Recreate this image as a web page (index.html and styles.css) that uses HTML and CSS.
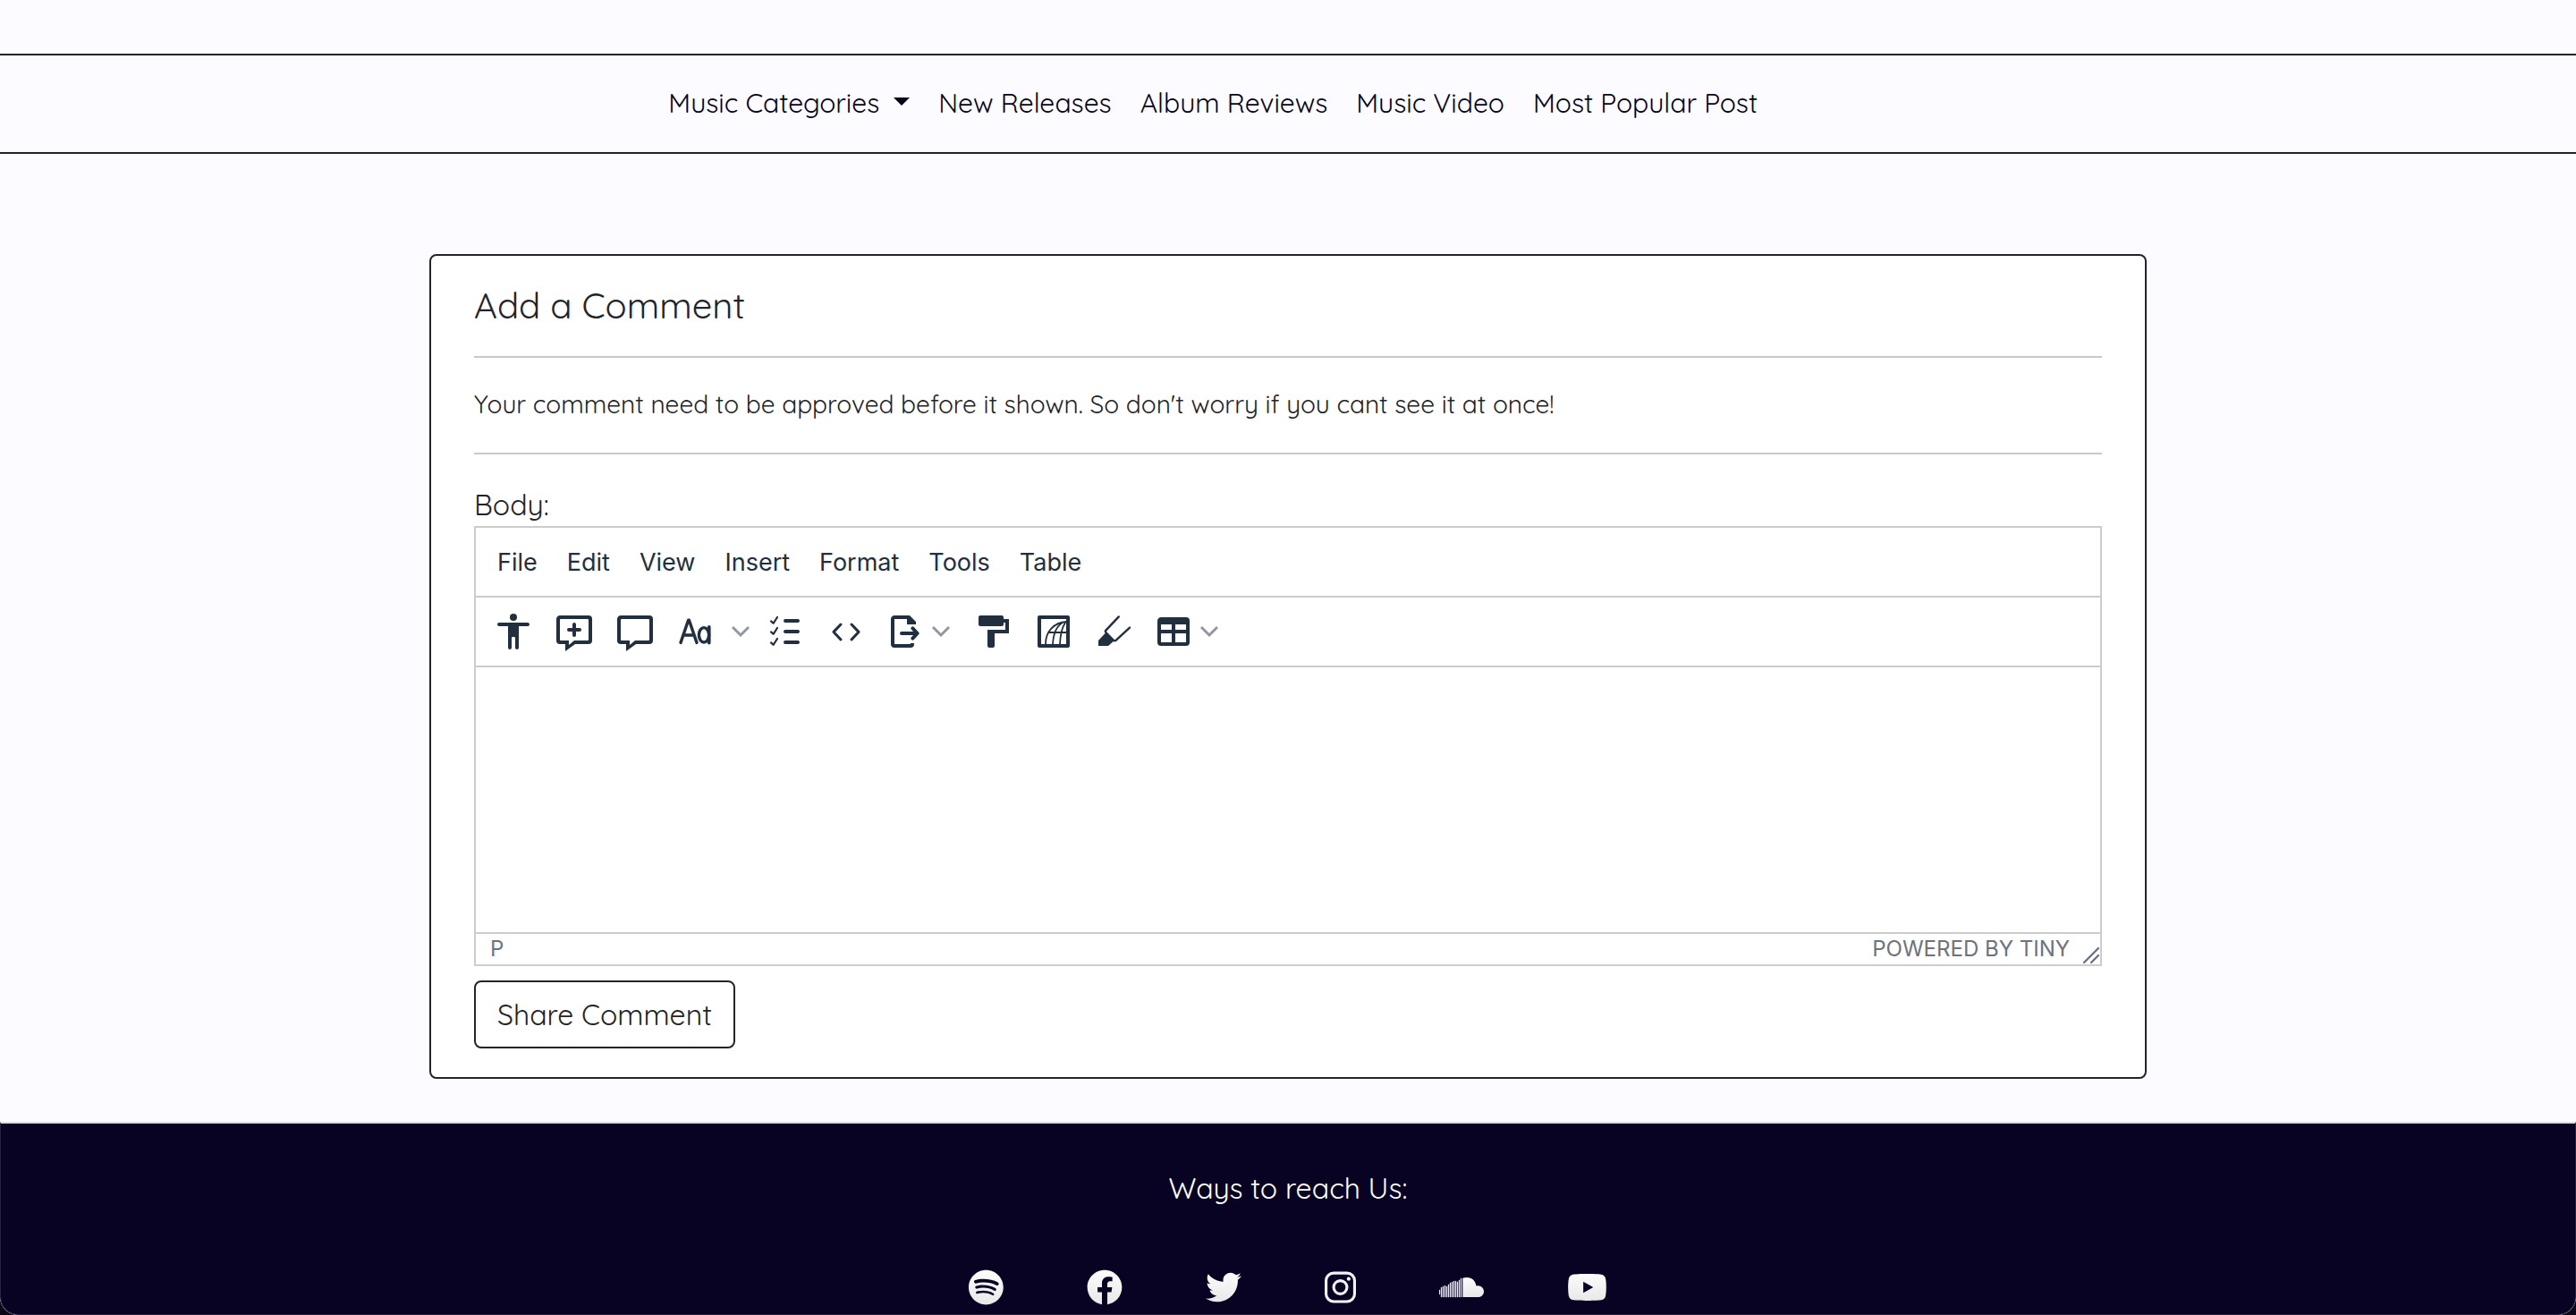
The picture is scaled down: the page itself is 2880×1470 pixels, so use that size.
FILE: index.html
```html
<!DOCTYPE html>
<html lang="en">
<head>
<meta charset="utf-8">
<meta name="viewport" content="width=device-width, initial-scale=1">
<title>Add a Comment</title>
<link rel="stylesheet" href="styles.css">
</head>
<body>
<nav class="site-nav" aria-label="Main">
  <button type="button" class="nav-link nav-toggle">Music Categories<span class="caret"></span></button>
  <a class="nav-link" href="#new">New Releases</a>
  <a class="nav-link" href="#reviews">Album Reviews</a>
  <a class="nav-link" href="#video">Music Video</a>
  <a class="nav-link" href="#popular">Most Popular Post</a>
</nav>

<main class="page">
  <form class="card">
    <h1 class="card-title">Add a Comment</h1>
    <p class="notice">Your comment need to be approved before it shown. So don't worry if you cant see it at once!</p>
    <label class="body-label" for="comment-body">Body:</label>
    <div class="editor">
      <div class="menubar">
        <button type="button" class="menu-item">File</button>
        <button type="button" class="menu-item">Edit</button>
        <button type="button" class="menu-item">View</button>
        <button type="button" class="menu-item">Insert</button>
        <button type="button" class="menu-item">Format</button>
        <button type="button" class="menu-item">Tools</button>
        <button type="button" class="menu-item">Table</button>
      </div>
      <div class="toolbar">
        <button type="button" class="tool" aria-label="Accessibility check">
          <svg class="tool-icon" viewBox="0 0 24 24"><circle cx="12" cy="4" r="2"/><path d="M4 7h16a1 1 0 0 1 0 2h-5v12a1 1 0 0 1-2 0v-5.500a.5.5 0 0 0-.5-.5h-1a.5.5 0 0 0-.5.500V21a1 1 0 0 1-2 0V9H4a1 1 0 0 1 0-2z"/></svg>
        </button>
        <button type="button" class="tool" aria-label="Add comment">
          <svg class="tool-icon" viewBox="0 0 24 24"><path fill-rule="evenodd" d="M4 3h16a2 2 0 0 1 2 2v12a2 2 0 0 1-2 2h-7.500L7 23v-4H4a2 2 0 0 1-2-2V5c0-1.100.9-2 2-2zm.5 2a.5.5 0 0 0-.5.500v11c0 .3.200.5.500.5H9v2.500l3-2.500h7.500a.5.5 0 0 0 .5-.5v-11a.5.5 0 0 0-.5-.5z"/><path d="M12 7a1 1 0 0 1 1 1v2h2a1 1 0 0 1 0 2h-2v2a1 1 0 0 1-2 0v-2H9a1 1 0 0 1 0-2h2V8a1 1 0 0 1 1-1z"/></svg>
        </button>
        <button type="button" class="tool" aria-label="Show comments">
          <svg class="tool-icon" viewBox="0 0 24 24"><path fill-rule="evenodd" d="M4 3h16a2 2 0 0 1 2 2v12a2 2 0 0 1-2 2h-7.500L7 23v-4H4a2 2 0 0 1-2-2V5c0-1.100.9-2 2-2zm.5 2a.5.5 0 0 0-.5.500v11c0 .3.200.5.500.5H9v2.500l3-2.500h7.500a.5.5 0 0 0 .5-.5v-11a.5.5 0 0 0-.5-.5z"/></svg>
        </button>
        <button type="button" class="tool" aria-label="Capitalization">
          <svg class="tool-icon line" viewBox="-0.5 0 24 24"><path d="M3 18.200 7.300 5.600h.4L12 18.200M4.600 14h5.800" stroke-width="1.700"/><path d="M18.900 9.400v9" stroke-width="1.800"/><ellipse cx="16" cy="13.900" rx="2.800" ry="4.100" stroke-width="1.700"/></svg>
        </button>
        <button type="button" class="tool-more" aria-label="Capitalization options">
          <svg class="chevron" viewBox="0 0 10 10"><path d="M1 3l4 4 4-4"/></svg>
        </button>
        <button type="button" class="tool" aria-label="Checklist">
          <svg class="tool-icon line" viewBox="0 0 24 24"><path d="M12 6h7M12 12h7M12 18h7" stroke-width="2"/><path d="M4 6.200l1.300 1.200L7.500 4M4 12.200l1.300 1.200L7.500 10M4 18.200l1.300 1.200L7.500 16" stroke-width="1.100"/></svg>
        </button>
        <button type="button" class="tool" aria-label="Source code">
          <svg class="tool-icon line" viewBox="0 0 24 24"><path d="M9 8l-4 4.200L9 16.500M15 8l4 4.200-4 4.300" stroke-width="1.500"/></svg>
        </button>
        <button type="button" class="tool tool-split" aria-label="Export">
          <svg class="tool-icon" viewBox="0 0 24 24"><path d="M6 3h8.500L18 6.500V8h-5V5H6v14h8.500c.3 0 .5-.2.500-.5h2V19a2 2 0 0 1-2 2H6a2 2 0 0 1-2-2V5c0-1.100.9-2 2-2z"/><path class="stroke" d="M10 13h8.500M16.200 10.200l2.600 2.800-2.600 2.800" stroke-width="2"/></svg>
          <svg class="chevron" viewBox="0 0 10 10"><path d="M1 3l4 4 4-4"/></svg>
        </button>
        <button type="button" class="tool" aria-label="Format painter">
          <svg class="tool-icon" viewBox="0 0 24 24"><path d="M5 3h12a1 1 0 0 1 1 1v1h3v8H13v7a1 1 0 0 1-1 1h-2a1 1 0 0 1-1-1v-9h10V7h-1v1a1 1 0 0 1-1 1H5a1 1 0 0 1-1-1V4a1 1 0 0 1 1-1z"/></svg>
        </button>
        <button type="button" class="tool" aria-label="Page embed">
          <svg class="tool-icon" viewBox="0 0 24 24"><path fill-rule="evenodd" d="M4 3h16a1 1 0 0 1 1 1v16a1 1 0 0 1-1 1H4a1 1 0 0 1-1-1V4a1 1 0 0 1 1-1zm1 2v14h14V5z"/><path class="stroke" d="M7.500 19C7.500 12 12 7 19.200 6.500M11.500 19c.3-5 2-10 5.500-12M15.500 19c.2-5 1-9 3-12M9 12.500h10.500" stroke-width=".9"/></svg>
        </button>
        <button type="button" class="tool" aria-label="Permanent pen">
          <svg class="tool-icon" viewBox="0 0 24 24"><path d="M3 17l4-4.200 4.700 4.500L8.500 20H3z"/><path class="stroke" d="M14.400 3.700l-7.200 7.600c-.4.5-.3.900 0 1.200l4.200 4.300c.5.400 1 .4 1.500 0l7.600-7" stroke-width="1.200"/></svg>
        </button>
        <button type="button" class="tool tool-split" aria-label="Table">
          <svg class="tool-icon" viewBox="0 0 24 24"><path fill-rule="evenodd" d="M5 4h14a2 2 0 0 1 2 2v12a2 2 0 0 1-2 2H5a2 2 0 0 1-2-2V6c0-1.100.9-2 2-2zm0 4v3h6V8zm8 0v3h6V8zm-8 5v5h6v-5zm8 0v5h6v-5z"/></svg>
          <svg class="chevron" viewBox="0 0 10 10"><path d="M1 3l4 4 4-4"/></svg>
        </button>
      </div>
      <textarea id="comment-body" class="edit-area"></textarea>
      <div class="statusbar">
        <span>P</span>
        <a class="branding" href="#tiny">POWERED BY TINY</a>
        <svg class="resize" viewBox="0 0 10 10"><path d="M1 9l8-8M5 9l4-4"/></svg>
      </div>
    </div>
    <button type="submit" class="submit">Share Comment</button>
  </form>
</main>

<footer class="footer">
  <p class="footer-title">Ways to reach Us:</p>
  <svg class="defs" width="0" height="0" aria-hidden="true"><linearGradient id="shade" x1="0" y1="0" x2="0" y2="1"><stop offset="0" stop-color="#fcfcfc"/><stop offset="1" stop-color="#e8e8e8"/></linearGradient></svg>
  <div class="socials">
    <a href="#spotify" aria-label="Spotify"><svg class="social" viewBox="0 0 496 512"><path d="M248 8C111.100 8 0 119.100 0 256s111.100 248 248 248 248-111.100 248-248S384.900 8 248 8zm100.700 364.900c-4.200 0-6.800-1.300-10.700-3.600-62.400-37.600-135-39.200-206.700-24.500-3.900 1-9 2.600-11.900 2.600-9.700 0-15.800-7.700-15.800-15.800 0-10.300 6.100-15.200 13.600-16.800 81.900-18.100 165.600-16.500 237 26.200 6.100 3.900 9.700 7.400 9.700 16.500s-7.100 15.400-15.200 15.400zm26.900-65.600c-5.200 0-8.700-2.300-12.300-4.200-62.500-37-155.700-51.900-238.600-29.400-4.800 1.300-7.400 2.600-11.900 2.600-10.700 0-19.400-8.700-19.400-19.400s5.200-17.800 15.500-20.700c27.800-7.800 56.200-13.600 97.800-13.600 64.900 0 127.600 16.100 177 45.500 8.100 4.800 11.300 11 11.300 19.700-.1 10.800-8.500 19.500-19.400 19.500zm31-76.200c-5.200 0-8.400-1.300-12.900-3.900-71.200-42.500-198.500-52.700-280.900-29.700-3.600 1-8.100 2.600-12.900 2.600-13.200 0-23.300-10.300-23.300-23.600 0-13.600 8.400-21.300 17.400-23.900 35.200-10.300 74.600-15.200 117.500-15.200 73 0 149.500 15.200 205.400 47.800 7.800 4.500 12.900 10.700 12.900 22.600 0 13.600-11 23.300-23.200 23.300z"/></svg></a>
    <a href="#facebook" aria-label="Facebook"><svg class="social" viewBox="0 0 512 512"><path d="M504 256C504 119 393 8 256 8S8 119 8 256c0 123.780 90.690 226.380 209.250 245V327.690h-63V256h63v-54.640c0-62.150 37-96.480 93.670-96.480 27.140 0 55.520 4.840 55.520 4.840v61h-31.280c-30.800 0-40.410 19.120-40.410 38.730V256h68.780l-11 71.690h-57.780V501C413.310 482.380 504 379.780 504 256z"/></svg></a>
    <a href="#twitter" aria-label="Twitter"><svg class="social" viewBox="0 0 512 512"><path d="M459.370 151.716c.325 4.548.325 9.097.325 13.645 0 138.720-105.583 298.558-298.558 298.558-59.452 0-114.680-17.219-161.137-47.106 8.447.974 16.568 1.299 25.340 1.299 49.055 0 94.213-16.568 130.274-44.832-46.132-.975-84.792-31.188-98.112-72.772 6.498.974 12.995 1.624 19.818 1.624 9.421 0 18.843-1.300 27.614-3.573-48.081-9.747-84.143-51.980-84.143-102.985v-1.299c13.969 7.797 30.214 12.670 47.431 13.319-28.264-18.843-46.781-51.005-46.781-87.391 0-19.492 5.197-37.360 14.294-52.954 51.655 63.675 129.300 105.258 216.365 109.807-1.624-7.797-2.599-15.918-2.599-24.040 0-57.828 46.782-104.934 104.934-104.934 30.213 0 57.502 12.670 76.670 33.137 23.715-4.548 46.456-13.320 66.599-25.340-7.798 24.366-24.366 44.833-46.132 57.827 21.117-2.273 41.584-8.122 60.426-16.243-14.292 20.791-32.161 39.308-52.628 54.253z"/></svg></a>
    <a href="#instagram" aria-label="Instagram"><svg class="social" viewBox="0 0 448 512"><g fill="none" stroke="#f2f2f2" stroke-width="40"><rect x="20" y="52" width="408" height="408" rx="108"/><circle cx="224" cy="256" r="95"/></g><circle cx="343.500" cy="136.500" r="27"/></svg></a>
    <a href="#soundcloud" aria-label="SoundCloud"><svg class="social" viewBox="0 0 50 40"><path d="M0 23h1v5H0zM2 20h1v11H2zM4 19h1v12H4zM6 18h1v13H6zM8 19h1v12H8zM10 17h1v14h-1zM12 15h1v16h-1zM14 14h1v17h-1zM16 13h1v18h-1zM18 13h1v18h-1zM20 14h1v17h-1zM22 12h1v19h-1zM24 10h1v21h-1z" stroke="#f2f2f2" stroke-width=".3"/><path d="M26.300 31V9.800C34 7.200 40.500 11 41.400 18.500 46 17.300 50 20.500 50 24.700c0 3.500-2.800 6.300-6.300 6.300z"/></svg></a>
    <a href="#youtube" aria-label="YouTube"><svg class="social" viewBox="0 0 576 512"><path d="M549.655 124.083c-6.281-23.650-24.787-42.276-48.284-48.597C458.781 64 288 64 288 64S117.220 64 74.629 75.486c-23.497 6.322-42.003 24.947-48.284 48.597-11.412 42.867-11.412 132.305-11.412 132.305s0 89.438 11.412 132.305c6.281 23.650 24.787 41.500 48.284 47.821C117.220 448 288 448 288 448s170.780 0 213.371-11.486c23.497-6.321 42.003-24.171 48.284-47.821 11.412-42.867 11.412-132.305 11.412-132.305s0-89.438-11.412-132.305zm-317.510 213.508V175.185l142.739 81.205-142.739 81.201z"/></svg></a>
  </div>
</footer>
</body>
</html>
```

FILE: styles.css
```css
* {
  box-sizing: border-box;
}

html {
  background: #0d0518;
}

body {
  margin: 0;
  min-height: 100vh;
  display: flex;
  flex-direction: column;
  background: #fcfbff;
  border-radius: 0 0 20px 20px;
  color: #212529;
  font-family: Quicksand, Lato, sans-serif;
  font-size: 32px;
  line-height: 48px;
}

button,
textarea {
  font: inherit;
  color: inherit;
  background: none;
  border: 0;
  margin: 0;
  padding: 0;
}

a {
  color: inherit;
  text-decoration: none;
}

/* Navigation */
.site-nav {
  display: flex;
  align-items: center;
  gap: 32px;
  margin-top: 60px;
  padding: 30px 24px 32px 25.95%;
  border-top: 2px solid #212529;
  border-bottom: 2px solid #212529;
}

.nav-link {
  font-size: 30px;
  line-height: 46px;
  color: #05021a;
  white-space: nowrap;
}

.nav-toggle {
  display: flex;
  align-items: center;
  gap: 16px;
}

.caret {
  margin-bottom: 4px;
  border: 9px solid transparent;
  border-top-color: currentColor;
  border-bottom: 0;
}

/* Comment card */
.page {
  padding: 112px 16px 48px;
}

.card {
  width: 100%;
  max-width: 1920px;
  margin: 0 auto;
  padding: 32px 48px;
  background: #fff;
  border: 2px solid #212529;
  border-radius: 8px;
}

.card-title {
  margin: 0 0 34px;
  font-size: 40px;
  font-weight: 400;
  line-height: 46px;
}

.notice {
  margin: 0;
  padding: 32px 0 34px;
  border-top: 2px solid #c7c8c9;
  border-bottom: 2px solid #c7c8c9;
  font-size: 28px;
  line-height: 40px;
}

.body-label {
  display: block;
  margin-top: 32px;
  line-height: 48px;
}

/* Rich text editor */
.editor {
  border: 2px solid #ccc;
  background: #fff;
  color: #222f3e;
  font-family: Inter, sans-serif;
}

.menubar,
.toolbar {
  display: flex;
  align-items: center;
  height: 78px;
  padding: 0 8px;
  border-bottom: 2px solid #ccc;
}

.menubar {
  gap: 1px;
}

.menu-item {
  padding: 2px 16px 0;
  font-size: 27px;
  line-height: 48px;
}

.tool {
  display: flex;
  align-items: center;
  padding: 10px;
  gap: 6px;
}

.tool-split {
  width: 96px;
  padding-left: 8px;
}

.tool-more {
  display: flex;
  justify-content: center;
  width: 32px;
}

.tool-icon {
  flex: none;
  width: 48px;
  height: 48px;
  fill: #222f3e;
}

.line,
.stroke {
  fill: none;
  stroke: #222f3e;
  stroke-linecap: round;
  stroke-linejoin: round;
}

.chevron {
  flex: none;
  width: 20px;
  height: 20px;
  fill: none;
  stroke: #9097a0;
  stroke-width: 1.5;
  stroke-linecap: square;
}

.edit-area {
  display: block;
  width: 100%;
  height: 296px;
  padding: 32px;
  resize: none;
  outline: 0;
}

.statusbar {
  display: flex;
  align-items: center;
  height: 36px;
  padding: 0 0 0 16px;
  border-top: 2px solid #ccc;
  color: #6b7380;
  font-size: 24px;
  line-height: 34px;
}

.branding {
  margin-left: auto;
}

.resize {
  align-self: flex-end;
  width: 20px;
  height: 20px;
  margin-left: 14px;
  fill: none;
  stroke: #6b7380;
  stroke-width: 1.2;
  stroke-linecap: round;
}

.submit {
  display: block;
  margin-top: 16px;
  padding: 12px 24px;
  border: 2px solid #212529;
  border-radius: 8px;
}

/* Footer */
.footer {
  flex: 1;
  padding: 48px 24px 8px;
  background: #080322;
  border: 1px solid #28243f;
  border-top: 2px solid #dedde6;
  border-radius: 0 0 20px 20px;
  color: #fff;
  text-align: center;
}

.defs {
  display: block;
}

.footer-title {
  margin: 0;
}

.socials {
  display: flex;
  justify-content: center;
  gap: 93px;
  margin-top: 67px;
}

.social {
  display: block;
  height: 40px;
  fill: url(#shade);
}
```
